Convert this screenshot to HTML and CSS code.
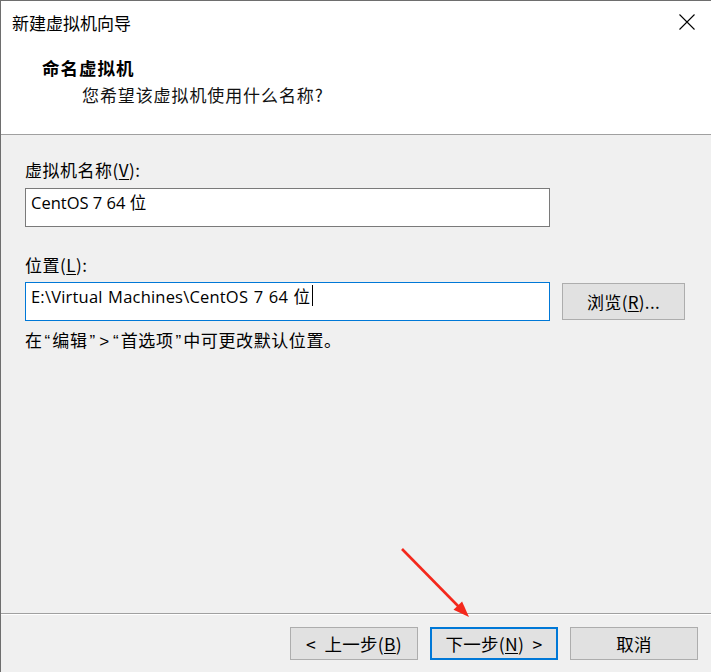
FILE: index.html
```html
<!DOCTYPE html>
<html lang="zh-CN">
<head>
<meta charset="utf-8">
<title>新建虚拟机向导</title>
<link rel="stylesheet" href="styles.css">
</head>
<body>
<div class="window">
  <div class="header">
    <div class="titlebar">
      <span class="title">新建虚拟机向导</span>
      <svg class="close" width="16" height="16" viewBox="0 0 16 16"><path d="M0.5 0.5 L15.5 15.5 M15.5 0.5 L0.5 15.5" stroke="#000" stroke-width="1.1" fill="none"/></svg>
    </div>
    <div class="heading">命名虚拟机</div>
    <div class="subheading">您希望该虚拟机使用什么名称?</div>
  </div>
  <div class="body">
    <div class="label">虚拟机名称(<u>V</u>):</div>
    <div class="input">CentOS 7 64 位</div>
    <div class="label label2">位置(<u>L</u>):</div>
    <div class="row">
      <div class="input focused">E:\Virtual Machines\CentOS 7 64 位<span class="caret"></span></div>
      <div class="btn browse">浏览(<u>R</u>)...</div>
    </div>
    <div class="hint">在<span class="q">“</span>编辑<span class="q">”</span><span class="q">&gt;</span><span class="q">“</span>首选项<span class="q">”</span>中可更改默认位置。</div>
  </div>
  <div class="footer">
    <div class="btn">&lt;&nbsp; 上一步(<u>B</u>)</div>
    <div class="btn default">下一步(<u>N</u>)&nbsp; &gt;</div>
    <div class="btn">取消</div>
  </div>
  <svg class="arrow" width="711" height="672" viewBox="0 0 711 672">
    <line x1="402" y1="549" x2="459" y2="607" stroke="#f4281c" stroke-width="2.6"/>
    <polygon points="469,617 453.5,609.8 462.1,601.4" fill="#f4281c"/>
  </svg>
</div>
</body>
</html>
```

FILE: styles.css
```css
* { box-sizing: border-box; }
html, body { margin: 0; padding: 0; }
body {
  width: 711px;
  height: 672px;
  overflow: hidden;
  background: #f0f0f0;
}
.window {
  position: relative;
  width: 711px;
  height: 672px;
  border-top: 1px solid #6e6e6e;
  border-left: 1px solid #6e6e6e;
  background: #f0f0f0;
  display: flex;
  flex-direction: column;
  font-family: "Noto Sans CJK SC", sans-serif;
  font-size: 17px;
  color: #000;
}
.header {
  background: #fff;
  height: 134px;
  border-bottom: 1px solid #a0a0a0;
  flex: none;
}
.titlebar {
  height: 43px;
  display: flex;
  align-items: center;
  justify-content: space-between;
  padding-left: 11px;
  padding-right: 16px;
}
.title {
  font-size: 17px;
  line-height: 24px;
}
.close { display: block; margin-top: -1px; }
.heading {
  margin-top: 12px;
  margin-left: 41px;
  font-size: 17.5px;
  font-weight: 700;
  line-height: 24px;
  letter-spacing: 1px;
}
.subheading {
  margin-top: 3px;
  margin-left: 81px;
  font-size: 17px;
  line-height: 24px;
  letter-spacing: 0.9px;
  color: #111;
}
.body {
  flex: 1;
  padding: 23px 0 0 24px;
}
.label {
  line-height: 24px;
  letter-spacing: 0.5px;
}
.label u, .btn u { text-decoration-thickness: 1px; text-underline-offset: 2px; }
.label2 { margin-top: 26px; }
.input {
  margin-top: 6px;
  width: 525px;
  height: 39px;
  background: #fff;
  border: 1px solid #7a7a7a;
  padding: 0 0 12px 5px;
  display: flex;
  align-items: center;
  font-family: "Open Sans", "Noto Sans CJK SC", sans-serif;
  font-size: 16.5px;
  white-space: nowrap;
}
.focused { border-color: #0078d7; margin-top: 0; word-spacing: 1px; letter-spacing: 0.2px; }
.caret {
  display: inline-block;
  width: 1px;
  height: 21px;
  background: #000;
  margin-left: 2px;
}
.row {
  margin-top: 5px;
  display: flex;
  align-items: center;
  gap: 12px;
}
.btn {
  width: 128px;
  height: 33px;
  background: #e1e1e1;
  border: 1px solid #adadad;
  display: flex;
  align-items: center;
  justify-content: center;
  font-size: 17.5px;
  letter-spacing: 0.3px;
  white-space: nowrap;
}
.browse {
  width: 123px;
  height: 37px;
  font-size: 17px;
}
.hint {
  margin-top: 7px;
  line-height: 24px;
  letter-spacing: 0.6px;
}
.q {
  font-family: "Liberation Sans", sans-serif;
  letter-spacing: 0;
  padding: 0 2px;
}
.footer {
  flex: none;
  height: 59px;
  border-top: 1px solid #a0a0a0;
  box-shadow: inset 0 1px 0 #fff;
  display: flex;
  justify-content: flex-end;
  align-items: flex-start;
  gap: 12px;
  padding: 13px 13px 0 0;
}
.default {
  border: 2px solid #0078d7;
}
.arrow {
  position: absolute;
  left: -1px;
  top: -1px;
  pointer-events: none;
}
```
